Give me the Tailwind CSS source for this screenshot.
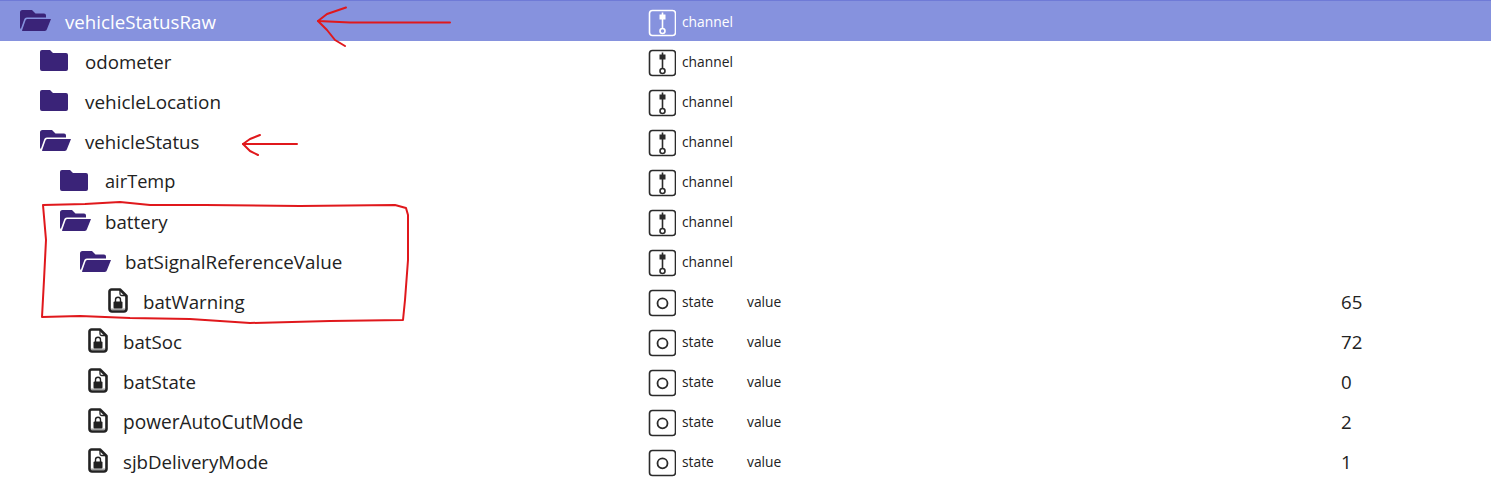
<!DOCTYPE html>
<html>
<head>
<meta charset="utf-8">
<script src="https://cdn.jsdelivr.net/npm/@tailwindcss/browser@4"></script>
</head>
<body class="bg-white">
<div class="relative w-[1491px] h-[488px] overflow-hidden font-['Open_Sans','Noto_Sans',sans-serif] text-[#222222]">
  <div class="h-px bg-[#6f7ad6]"></div>

  <!-- row 0 -->
  <div class="flex h-10 items-center bg-[#8692de] text-white">
    <div class="flex w-[648px] items-center pl-[20px]">
      <svg class="w-[31px] h-[21px] text-[#3a2378]" viewBox="0 0 31 21" fill="currentColor"><path d="M0 2.500A2.500 2.500 0 0 1 2.500 0H12L15.500 3.500H24A2 2 0 0 1 26 5.500V7.500H7C5 7.500 4.500 8.500 4 10L0.800 19C0.300 18.500 0 18 0 17Z"/><path d="M8 9H31L27 19A2.500 2.500 0 0 1 24.500 21H3C2.500 21 2.200 21 2 20.500L5.500 10.500C6 9.300 7 9 8 9Z"/></svg>
      <span class="ml-[14px] mt-[2px] text-[18.700px]">vehicleStatusRaw</span>
    </div>
    <svg class="mt-[4px] w-[28px] h-[28px]" viewBox="0 0 28 28" fill="none" stroke="currentColor" stroke-width="1.600"><rect x="1.500" y="1.500" width="26" height="25" rx="3"/><path d="M14.500 3.500V19"/><rect x="11.500" y="5.500" width="6" height="5" fill="currentColor" stroke="none"/><circle cx="14.500" cy="22" r="2.500"/></svg>
    <span class="ml-[6px] mt-[2px] text-[13.800px]">channel</span>
  </div>

  <!-- channel rows -->
  <div class="flex h-10 items-center">
    <div class="flex w-[648px] items-center pl-[40px]">
      <svg class="w-[28px] h-[21px] text-[#3a2378]" viewBox="0 0 28 21" fill="currentColor"><path d="M2 0H10L13 3H26A2 2 0 0 1 28 5V19A2 2 0 0 1 26 21H2A2 2 0 0 1 0 19V2A2 2 0 0 1 2 0Z"/></svg>
      <span class="ml-[17px] mt-[2px] text-[18.700px]">odometer</span>
    </div>
    <svg class="mt-[4px] w-[28px] h-[28px]" viewBox="0 0 28 28" fill="none" stroke="#2b2b2b" stroke-width="1.600"><rect x="1.500" y="1.500" width="26" height="25" rx="3"/><path d="M14.500 3.500V19"/><rect x="11.500" y="5.500" width="6" height="5" fill="#2b2b2b" stroke="none"/><circle cx="14.500" cy="22" r="2.500"/></svg>
    <span class="ml-[6px] mt-[2px] text-[13.800px]">channel</span>
  </div>
  <div class="flex h-10 items-center">
    <div class="flex w-[648px] items-center pl-[40px]">
      <svg class="w-[28px] h-[21px] text-[#3a2378]" viewBox="0 0 28 21" fill="currentColor"><path d="M2 0H10L13 3H26A2 2 0 0 1 28 5V19A2 2 0 0 1 26 21H2A2 2 0 0 1 0 19V2A2 2 0 0 1 2 0Z"/></svg>
      <span class="ml-[17px] mt-[2px] text-[18.900px]">vehicleLocation</span>
    </div>
    <svg class="mt-[4px] w-[28px] h-[28px]" viewBox="0 0 28 28" fill="none" stroke="#2b2b2b" stroke-width="1.600"><rect x="1.500" y="1.500" width="26" height="25" rx="3"/><path d="M14.500 3.500V19"/><rect x="11.500" y="5.500" width="6" height="5" fill="#2b2b2b" stroke="none"/><circle cx="14.500" cy="22" r="2.500"/></svg>
    <span class="ml-[6px] mt-[2px] text-[13.800px]">channel</span>
  </div>
  <div class="flex h-10 items-center">
    <div class="flex w-[648px] items-center pl-[40px]">
      <svg class="w-[31px] h-[21px] text-[#3a2378]" viewBox="0 0 31 21" fill="currentColor"><path d="M0 2.500A2.500 2.500 0 0 1 2.500 0H12L15.500 3.500H24A2 2 0 0 1 26 5.500V7.500H7C5 7.500 4.500 8.500 4 10L0.800 19C0.300 18.500 0 18 0 17Z"/><path d="M8 9H31L27 19A2.500 2.500 0 0 1 24.500 21H3C2.500 21 2.200 21 2 20.500L5.500 10.500C6 9.300 7 9 8 9Z"/></svg>
      <span class="ml-[14px] mt-[2px] text-[18.700px]">vehicleStatus</span>
    </div>
    <svg class="mt-[4px] w-[28px] h-[28px]" viewBox="0 0 28 28" fill="none" stroke="#2b2b2b" stroke-width="1.600"><rect x="1.500" y="1.500" width="26" height="25" rx="3"/><path d="M14.500 3.500V19"/><rect x="11.500" y="5.500" width="6" height="5" fill="#2b2b2b" stroke="none"/><circle cx="14.500" cy="22" r="2.500"/></svg>
    <span class="ml-[6px] mt-[2px] text-[13.800px]">channel</span>
  </div>
  <div class="flex h-10 items-center">
    <div class="flex w-[648px] items-center pl-[60px]">
      <svg class="w-[28px] h-[21px] text-[#3a2378]" viewBox="0 0 28 21" fill="currentColor"><path d="M2 0H10L13 3H26A2 2 0 0 1 28 5V19A2 2 0 0 1 26 21H2A2 2 0 0 1 0 19V2A2 2 0 0 1 2 0Z"/></svg>
      <span class="ml-[17px] mt-[2px] text-[18.200px]">airTemp</span>
    </div>
    <svg class="mt-[4px] w-[28px] h-[28px]" viewBox="0 0 28 28" fill="none" stroke="#2b2b2b" stroke-width="1.600"><rect x="1.500" y="1.500" width="26" height="25" rx="3"/><path d="M14.500 3.500V19"/><rect x="11.500" y="5.500" width="6" height="5" fill="#2b2b2b" stroke="none"/><circle cx="14.500" cy="22" r="2.500"/></svg>
    <span class="ml-[6px] mt-[2px] text-[13.800px]">channel</span>
  </div>
  <div class="flex h-10 items-center">
    <div class="flex w-[648px] items-center pl-[60px]">
      <svg class="w-[31px] h-[21px] text-[#3a2378]" viewBox="0 0 31 21" fill="currentColor"><path d="M0 2.500A2.500 2.500 0 0 1 2.500 0H12L15.500 3.500H24A2 2 0 0 1 26 5.500V7.500H7C5 7.500 4.500 8.500 4 10L0.800 19C0.300 18.500 0 18 0 17Z"/><path d="M8 9H31L27 19A2.500 2.500 0 0 1 24.500 21H3C2.500 21 2.200 21 2 20.500L5.500 10.500C6 9.300 7 9 8 9Z"/></svg>
      <span class="ml-[14px] mt-[2px] text-[18.700px]">battery</span>
    </div>
    <svg class="mt-[4px] w-[28px] h-[28px]" viewBox="0 0 28 28" fill="none" stroke="#2b2b2b" stroke-width="1.600"><rect x="1.500" y="1.500" width="26" height="25" rx="3"/><path d="M14.500 3.500V19"/><rect x="11.500" y="5.500" width="6" height="5" fill="#2b2b2b" stroke="none"/><circle cx="14.500" cy="22" r="2.500"/></svg>
    <span class="ml-[6px] mt-[2px] text-[13.800px]">channel</span>
  </div>
  <div class="flex h-10 items-center">
    <div class="flex w-[648px] items-center pl-[80px]">
      <svg class="w-[31px] h-[21px] text-[#3a2378]" viewBox="0 0 31 21" fill="currentColor"><path d="M0 2.500A2.500 2.500 0 0 1 2.500 0H12L15.500 3.500H24A2 2 0 0 1 26 5.500V7.500H7C5 7.500 4.500 8.500 4 10L0.800 19C0.300 18.500 0 18 0 17Z"/><path d="M8 9H31L27 19A2.500 2.500 0 0 1 24.500 21H3C2.500 21 2.200 21 2 20.500L5.500 10.500C6 9.300 7 9 8 9Z"/></svg>
      <span class="ml-[14px] mt-[2px] text-[18.800px]">batSignalReferenceValue</span>
    </div>
    <svg class="mt-[4px] w-[28px] h-[28px]" viewBox="0 0 28 28" fill="none" stroke="#2b2b2b" stroke-width="1.600"><rect x="1.500" y="1.500" width="26" height="25" rx="3"/><path d="M14.500 3.500V19"/><rect x="11.500" y="5.500" width="6" height="5" fill="#2b2b2b" stroke="none"/><circle cx="14.500" cy="22" r="2.500"/></svg>
    <span class="ml-[6px] mt-[2px] text-[13.800px]">channel</span>
  </div>

  <!-- state rows -->
  <div class="flex h-10 items-center">
    <div class="flex w-[648px] items-center pl-[108px]">
      <svg class="w-[20px] h-[25px]" viewBox="0 0 20 25" fill="none"><path d="M3.500 1.500H12L18.500 8V21A2.500 2.500 0 0 1 16 23.500H4A2.500 2.500 0 0 1 1.500 21V3.500A2 2 0 0 1 3.500 1.500Z" stroke="#222222" stroke-width="2.600" stroke-linejoin="round"/><path d="M12 2V6A1.500 1.500 0 0 0 13.500 7.500H18" stroke="#222222" stroke-width="1.300"/><rect x="3" y="20.500" width="14" height="1.500" fill="#a0a0a0"/><rect x="5.500" y="13.500" width="9" height="7" rx="1" fill="#222222"/><path d="M7.500 14V11.800A2.500 2.500 0 0 1 12.500 11.800V14" stroke="#222222" stroke-width="1.400"/></svg>
      <span class="ml-[15px] mt-[2px] text-[18.700px]">batWarning</span>
    </div>
    <svg class="mt-[4px] w-[28px] h-[28px]" viewBox="0 0 28 28" fill="none" stroke="#2b2b2b" stroke-width="1.600"><rect x="1.500" y="1.500" width="26" height="25" rx="3"/><circle cx="14.500" cy="14.300" r="5" stroke-width="1.800"/></svg>
    <span class="ml-[6px] mt-[2px] w-[65px] text-[13.800px]">state</span>
    <span class="mt-[2px] w-[594px] text-[13.800px]">value</span>
    <span class="mt-[2px] text-[18.700px]">65</span>
  </div>
  <div class="flex h-10 items-center">
    <div class="flex w-[648px] items-center pl-[88px]">
      <svg class="w-[20px] h-[25px]" viewBox="0 0 20 25" fill="none"><path d="M3.500 1.500H12L18.500 8V21A2.500 2.500 0 0 1 16 23.500H4A2.500 2.500 0 0 1 1.500 21V3.500A2 2 0 0 1 3.500 1.500Z" stroke="#222222" stroke-width="2.600" stroke-linejoin="round"/><path d="M12 2V6A1.500 1.500 0 0 0 13.500 7.500H18" stroke="#222222" stroke-width="1.300"/><rect x="3" y="20.500" width="14" height="1.500" fill="#a0a0a0"/><rect x="5.500" y="13.500" width="9" height="7" rx="1" fill="#222222"/><path d="M7.500 14V11.800A2.500 2.500 0 0 1 12.500 11.800V14" stroke="#222222" stroke-width="1.400"/></svg>
      <span class="ml-[15px] mt-[2px] text-[18.700px]">batSoc</span>
    </div>
    <svg class="mt-[4px] w-[28px] h-[28px]" viewBox="0 0 28 28" fill="none" stroke="#2b2b2b" stroke-width="1.600"><rect x="1.500" y="1.500" width="26" height="25" rx="3"/><circle cx="14.500" cy="14.300" r="5" stroke-width="1.800"/></svg>
    <span class="ml-[6px] mt-[2px] w-[65px] text-[13.800px]">state</span>
    <span class="mt-[2px] w-[594px] text-[13.800px]">value</span>
    <span class="mt-[2px] text-[18.700px]">72</span>
  </div>
  <div class="flex h-10 items-center">
    <div class="flex w-[648px] items-center pl-[88px]">
      <svg class="w-[20px] h-[25px]" viewBox="0 0 20 25" fill="none"><path d="M3.500 1.500H12L18.500 8V21A2.500 2.500 0 0 1 16 23.500H4A2.500 2.500 0 0 1 1.500 21V3.500A2 2 0 0 1 3.500 1.500Z" stroke="#222222" stroke-width="2.600" stroke-linejoin="round"/><path d="M12 2V6A1.500 1.500 0 0 0 13.500 7.500H18" stroke="#222222" stroke-width="1.300"/><rect x="3" y="20.500" width="14" height="1.500" fill="#a0a0a0"/><rect x="5.500" y="13.500" width="9" height="7" rx="1" fill="#222222"/><path d="M7.500 14V11.800A2.500 2.500 0 0 1 12.500 11.800V14" stroke="#222222" stroke-width="1.400"/></svg>
      <span class="ml-[15px] mt-[2px] text-[18.700px]">batState</span>
    </div>
    <svg class="mt-[4px] w-[28px] h-[28px]" viewBox="0 0 28 28" fill="none" stroke="#2b2b2b" stroke-width="1.600"><rect x="1.500" y="1.500" width="26" height="25" rx="3"/><circle cx="14.500" cy="14.300" r="5" stroke-width="1.800"/></svg>
    <span class="ml-[6px] mt-[2px] w-[65px] text-[13.800px]">state</span>
    <span class="mt-[2px] w-[594px] text-[13.800px]">value</span>
    <span class="mt-[2px] text-[18.700px]">0</span>
  </div>
  <div class="flex h-10 items-center">
    <div class="flex w-[648px] items-center pl-[88px]">
      <svg class="w-[20px] h-[25px]" viewBox="0 0 20 25" fill="none"><path d="M3.500 1.500H12L18.500 8V21A2.500 2.500 0 0 1 16 23.500H4A2.500 2.500 0 0 1 1.500 21V3.500A2 2 0 0 1 3.500 1.500Z" stroke="#222222" stroke-width="2.600" stroke-linejoin="round"/><path d="M12 2V6A1.500 1.500 0 0 0 13.500 7.500H18" stroke="#222222" stroke-width="1.300"/><rect x="3" y="20.500" width="14" height="1.500" fill="#a0a0a0"/><rect x="5.500" y="13.500" width="9" height="7" rx="1" fill="#222222"/><path d="M7.500 14V11.800A2.500 2.500 0 0 1 12.500 11.800V14" stroke="#222222" stroke-width="1.400"/></svg>
      <span class="ml-[15px] mt-[2px] text-[19.100px]">powerAutoCutMode</span>
    </div>
    <svg class="mt-[4px] w-[28px] h-[28px]" viewBox="0 0 28 28" fill="none" stroke="#2b2b2b" stroke-width="1.600"><rect x="1.500" y="1.500" width="26" height="25" rx="3"/><circle cx="14.500" cy="14.300" r="5" stroke-width="1.800"/></svg>
    <span class="ml-[6px] mt-[2px] w-[65px] text-[13.800px]">state</span>
    <span class="mt-[2px] w-[594px] text-[13.800px]">value</span>
    <span class="mt-[2px] text-[18.700px]">2</span>
  </div>
  <div class="flex h-10 items-center">
    <div class="flex w-[648px] items-center pl-[88px]">
      <svg class="w-[20px] h-[25px]" viewBox="0 0 20 25" fill="none"><path d="M3.500 1.500H12L18.500 8V21A2.500 2.500 0 0 1 16 23.500H4A2.500 2.500 0 0 1 1.500 21V3.500A2 2 0 0 1 3.500 1.500Z" stroke="#222222" stroke-width="2.600" stroke-linejoin="round"/><path d="M12 2V6A1.500 1.500 0 0 0 13.500 7.500H18" stroke="#222222" stroke-width="1.300"/><rect x="3" y="20.500" width="14" height="1.500" fill="#a0a0a0"/><rect x="5.500" y="13.500" width="9" height="7" rx="1" fill="#222222"/><path d="M7.500 14V11.800A2.500 2.500 0 0 1 12.500 11.800V14" stroke="#222222" stroke-width="1.400"/></svg>
      <span class="ml-[15px] mt-[2px] text-[18.700px]">sjbDeliveryMode</span>
    </div>
    <svg class="mt-[4px] w-[28px] h-[28px]" viewBox="0 0 28 28" fill="none" stroke="#2b2b2b" stroke-width="1.600"><rect x="1.500" y="1.500" width="26" height="25" rx="3"/><circle cx="14.500" cy="14.300" r="5" stroke-width="1.800"/></svg>
    <span class="ml-[6px] mt-[2px] w-[65px] text-[13.800px]">state</span>
    <span class="mt-[2px] w-[594px] text-[13.800px]">value</span>
    <span class="mt-[2px] text-[18.700px]">1</span>
  </div>

  <!-- hand-drawn red annotations -->
  <svg class="absolute left-0 top-0 w-[1491px] h-[488px] pointer-events-none" viewBox="0 0 1491 488" fill="none" stroke="#e0181c" stroke-width="2" stroke-linejoin="round" stroke-linecap="round">
    <path d="M450 22.500H350L318 21L327 14L346 7.500"/>
    <path d="M318 21L327 30L335 40L345 46"/>
    <path d="M297 144H243L250 139L260 135"/>
    <path d="M243 144L250 151L258 155"/>
    <path d="M43 205L85 204L120 202L150 205L205 205L300 206L395 205L406 208L408 215L408 260L405 300L403 320L330 321L250 323L190 319L130 318L80 316L42 317L44 280L46 240L43 205Z"/>
  </svg>
</div>
</body>
</html>
